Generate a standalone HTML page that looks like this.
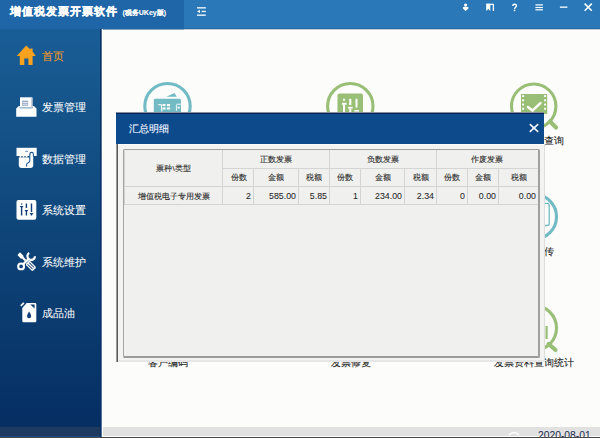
<!DOCTYPE html>
<html><head><meta charset="utf-8">
<style>
*{margin:0;padding:0;box-sizing:border-box}
html,body{width:600px;height:438px;overflow:hidden;background:#fcfcfa;font-family:"Liberation Sans",sans-serif}
.abs{position:absolute}
#topL{left:0;top:0;width:184px;height:29px;background:#1f66a8}
#topR{left:184px;top:0;width:416px;height:29px;background:#2a78b8}
#title{left:10px;top:2.5px;font-size:11px;font-weight:bold;color:#fff;white-space:nowrap;line-height:16px;letter-spacing:1.05px;-webkit-text-stroke:0.3px #fff}
#title small{font-size:7px;font-weight:bold;margin-left:4px;position:relative;top:0.5px;letter-spacing:0;-webkit-text-stroke:0.1px #fff}
#side{left:0;top:29px;width:101px;height:409px;background:linear-gradient(#1a5e98,#16578d 14%,#0e4478 52%,#052d62);border-right:1px solid #06306a}
.nav{left:42px;font-size:10.5px;color:#fff;white-space:nowrap;line-height:12px;-webkit-text-stroke:0.05px #fff}
#content{left:102px;top:29px;width:498px;height:409px;background:#fcfcfa;border-left:1px solid #fff}
#status{left:103px;top:427px;width:497px;height:9px;background:#e1e1e1}
#statusL{left:0;top:427px;width:100px;height:9px;background:#1f3a60}
.lbl{font-size:9.7px;color:#1e1e1e;-webkit-text-stroke:0.1px #1e1e1e;white-space:nowrap;line-height:12px;text-align:center;width:120px}
#dtitle{left:129px;top:123px;font-size:10px;color:#eef4ff;-webkit-text-stroke:0.15px #eef4ff;line-height:12px;white-space:nowrap}
.t{font-size:8px;color:#2a2a2a;-webkit-text-stroke:0.1px #2a2a2a;white-space:nowrap}
.n{font-size:9.8px;color:#1e1e1e;white-space:nowrap;transform:scaleX(0.9);transform-origin:100% 50%;-webkit-text-stroke:0.05px #1e1e1e}
</style></head><body>
<div id="topL" class="abs"></div>
<div id="topR" class="abs"></div>
<div id="title" class="abs">增值税发票开票软件<small>(税务UKey版)</small></div>

<!-- top icons -->
<svg class="abs" style="left:0;top:0" width="600" height="29" viewBox="0 0 600 29">
  <g fill="#fff">
    <rect x="197" y="7.2" width="8.8" height="1.3"/>
    <rect x="197" y="14.5" width="8.8" height="1.3"/>
    <polygon points="197,11.4 200,9.8 200,13"/>
    <rect x="201.6" y="10.8" width="4.2" height="1.3"/>
  </g>
  <g fill="#fff">
    <circle cx="465.6" cy="5.1" r="1.6"/>
    <path d="M462.9 7 L468.4 7 L468.4 8.6 L465.6 11 L462.9 8.6 Z"/>
  </g>
  <path d="M486.3 4.4 L493.4 4.4 L493.4 10.9" fill="none" stroke="#fff" stroke-width="1.3"/>
  <path d="M486.2 3.8 L490.3 3.8 L490.3 11 L488.3 9 L486.2 11 Z" fill="#fff"/>
  <path d="M512.7 6 Q512.8 4.2 514.6 4.2 Q516.4 4.2 516.4 5.8 Q516.4 6.9 515.3 7.5 Q514.5 8 514.5 9.2" fill="none" stroke="#fff" stroke-width="1.4"/><rect x="513.8" y="9.9" width="1.5" height="1.3" fill="#fff"/>
  <g fill="#fff">
    <rect x="535.4" y="4.3" width="7.5" height="1.2"/>
    <rect x="535.4" y="6.9" width="7.5" height="1.2"/>
    <rect x="535.4" y="9.2" width="7.5" height="1.2"/>
    <rect x="559.9" y="6.5" width="7.5" height="1.3"/>
  </g>
  <path d="M584.6 3.6 L591.8 10.8 M591.8 3.6 L584.6 10.8" stroke="#fff" stroke-width="1.5"/>
</svg>

<div id="side" class="abs"></div>
<div id="statusL" class="abs"></div>

<!-- sidebar icons -->
<svg class="abs" style="left:0;top:29px" width="101" height="300" viewBox="0 29 101 300">
  <!-- home -->
  <path d="M26.2 45.6 L30.4 49.4 L30.4 48.4 L32.6 48.4 L32.6 51.4 L35.8 55.9 L32.6 55.9 L32.6 65 L28.4 65 L28.4 58.5 L24.3 58.5 L24.3 65 L19.8 65 L19.8 55.9 L16.8 55.9 Z" fill="#f7a21e"/>
  <!-- invoice/printer -->
  <rect x="20" y="97.3" width="12.4" height="10.3" fill="#fff"/><rect x="30.9" y="97.8" width="1.5" height="9.8" fill="#c8d0dc"/>
  <rect x="22" y="100.6" width="6.2" height="5.2" fill="#9aacc8"/>
  <rect x="22.6" y="102" width="5" height="0.9" fill="#e8ecf4"/><rect x="22.6" y="103.8" width="5" height="0.9" fill="#e8ecf4"/>
  <path d="M16.2 108.6 L18.8 105.9 L19.8 105.9 L19.8 108.3 L32.6 108.3 L32.6 105.9 L33.9 105.9 L36.5 108.6 L36.5 116.7 L16.2 116.7 Z" fill="#fff"/>
  <!-- data mgmt -->
  <rect x="16.5" y="147.8" width="20.2" height="8.2" fill="#fff"/>
  <path d="M18.8 157.6 H33.2 V165.6 Q33.2 168 30.8 168 H21.2 Q18.8 168 18.8 165.6 Z" fill="#fff"/>
  <rect x="29.6" y="155" width="3.6" height="3" fill="#fff"/>
  <g fill="#fff"><rect x="19.6" y="156" width="1.8" height="1.6"/><rect x="22.6" y="156" width="1.8" height="1.6"/><rect x="25.6" y="156" width="1.8" height="1.6"/></g>
  <path d="M25.6 151.9 L26.6 150.8 L27.6 151.9" stroke="#1b5594" stroke-width="0.9" fill="none"/>
  <path d="M33.4 156.2 V154.3 Q33.4 152.4 31.6 152.4 Q29.8 152.4 29.8 154.3 V160.6 Q29.8 162.2 28.2 162.7 Q26.6 163.2 26.6 164.8 V166.4" stroke="#1b5594" stroke-width="1.1" fill="none"/>
  <!-- settings -->
  <rect x="16.5" y="199.9" width="19.8" height="19.8" rx="2" fill="#fff"/>
  <g stroke="#123f78" stroke-width="1.4">
    <line x1="21.6" y1="203.5" x2="21.6" y2="204.6"/><line x1="21.6" y1="207" x2="21.6" y2="215.5"/>
    <line x1="26.4" y1="203.5" x2="26.4" y2="208"/><line x1="26.4" y1="210.5" x2="26.4" y2="215.5"/>
    <line x1="31.5" y1="203.5" x2="31.5" y2="212"/><line x1="31.5" y1="214" x2="31.5" y2="215.5"/>
  </g>
  <g fill="#123f78">
    <polygon points="19.6,206 23.6,206 21.6,208.2"/>
    <polygon points="24.4,210 28.4,210 26.4,212.2"/>
    <polygon points="29.5,213 33.5,213 31.5,215.2"/>
  </g>
  <!-- tools -->
  <circle cx="21.1" cy="266.4" r="2.9" fill="none" stroke="#fff" stroke-width="2.1"/>
  <line x1="23.2" y1="264.3" x2="29" y2="258.5" stroke="#fff" stroke-width="2.3"/>
  <path d="M35 256.2 A3.8 3.8 0 1 1 29.2 252.9" fill="none" stroke="#fff" stroke-width="2.2"/>
  <g transform="rotate(45 25.5 260.5)">
    <rect x="15.8" y="258.6" width="5.6" height="3.8" rx="0.8" fill="#fff"/>
    <rect x="21" y="259.5" width="4.5" height="2" fill="#fff"/>
    <rect x="28.2" y="257.7" width="9.8" height="5.6" rx="1.2" fill="#fff"/>
    <rect x="29.6" y="258.9" width="7" height="0.9" fill="#134179"/>
    <rect x="29.6" y="261.2" width="7" height="0.9" fill="#134179"/>
  </g>
  <!-- oil -->
  <path d="M26.6 303.1 L35 303.1 Q36.3 303.1 36.3 304.4 L36.3 321 Q36.3 322.3 35 322.3 L23.6 322.3 Q22.3 322.3 22.3 321 L22.3 307.9 Z" fill="#fff"/>
  <path d="M20.2 305.3 L23.3 302.3 L24.5 303.5 L21.4 306.5 Z" fill="#fff"/>
  <polygon points="30.2,304.6 34.6,304.6 34.6,308.6" fill="#123f78"/>
  <path d="M29.1 311.6 Q27 314.8 27 316 Q27 318.2 29.1 318.2 Q31.2 318.2 31.2 316 Q31.2 314.8 29.1 311.6 Z" fill="#123f78"/>
</svg>

<div class="abs nav" style="top:49.5px;color:#f59c1c;-webkit-text-stroke:0.05px #f59c1c">首页</div>
<div class="abs nav" style="top:101.3px">发票管理</div>
<div class="abs nav" style="top:152.6px">数据管理</div>
<div class="abs nav" style="top:203.8px">系统设置</div>
<div class="abs nav" style="top:255.5px">系统维护</div>
<div class="abs nav" style="top:306.8px">成品油</div>

<div id="content" class="abs"></div>
<div id="status" class="abs"></div>
<div class="abs" style="left:101px;top:29px;width:1px;height:409px;background:#5a7294"></div>
<div class="abs" style="left:184px;top:28px;width:416px;height:1px;background:#2468a4"></div>
<div class="abs" style="left:184px;top:29px;width:416px;height:1px;background:#c4ccd4"></div>
<div class="abs" style="left:103px;top:29px;width:81px;height:1px;background:#8aa4c0"></div>

<!-- content icons -->
<svg class="abs" style="left:102px;top:29px" width="498" height="398" viewBox="102 29 498 398">
  <!-- icon 1 teal -->
  <circle cx="167.5" cy="106.2" r="22.7" fill="none" stroke="#72bbc5" stroke-width="3.1"/>
  <path d="M153.8 100 Q153.8 98.8 155 98.8 L179.4 98.8 Q181 98.8 181 100.4 L181 115 L153.8 115 Z" fill="#72bbc5"/>
  <polygon points="166.3,96.8 174.5,92.9 176.8,96.8" fill="#72bbc5"/>
  <polyline points="158.2,104.7 161.3,104.7 161.8,111.5" fill="none" stroke="#fff" stroke-width="1.1"/>
  <g fill="#fff"><rect x="162.5" y="104" width="3" height="2.1"/><rect x="166.9" y="104" width="3.2" height="2.1"/><rect x="162.5" y="107.4" width="3" height="2.1"/><rect x="166.9" y="107.4" width="3.2" height="2.1"/></g>
  <path d="M181.2 104.2 L177.4 104.2 Q176.4 104.2 176.4 105.3 L176.4 111" fill="none" stroke="#fff" stroke-width="0.9"/>
  <rect x="177.6" y="106.6" width="2" height="2" fill="#fff"/>
  <!-- icon 2 green -->
  <circle cx="350.3" cy="106.2" r="22.7" fill="none" stroke="#99be76" stroke-width="3.1"/>
  <rect x="337.5" y="93.5" width="25.5" height="22" rx="2" fill="#99be76"/>
  <g fill="#fff">
    <rect x="343" y="98.8" width="2.1" height="1.9"/><rect x="342" y="102.8" width="4.5" height="1.9"/><rect x="343" y="104.5" width="2.1" height="10"/>
    <rect x="349.2" y="98.8" width="2.1" height="6.2"/><rect x="348.1" y="106.8" width="4.6" height="1.8"/><rect x="349.2" y="108.5" width="2.1" height="6"/>
    <rect x="355.5" y="98.8" width="2" height="8.8"/><rect x="354.3" y="110" width="4.7" height="1.6"/>
  </g>
  <!-- icon 3 magnifier film -->
  <circle cx="533.7" cy="106.2" r="22.2" fill="none" stroke="#99be76" stroke-width="3.1"/>
  <line x1="550" y1="121.5" x2="556" y2="127.5" stroke="#99be76" stroke-width="4.2" stroke-linecap="round"/>
  <rect x="521" y="94" width="26.2" height="20" fill="#99be76"/>
  <g fill="#fff"><rect x="522.1" y="95.1" width="2" height="2" rx="0.4"/><rect x="522.1" y="99.3" width="2" height="2" rx="0.4"/><rect x="522.1" y="103.5" width="2" height="2" rx="0.4"/><rect x="522.1" y="107.7" width="2" height="2" rx="0.4"/><rect x="544.1" y="95.1" width="2" height="2" rx="0.4"/><rect x="544.1" y="99.3" width="2" height="2" rx="0.4"/><rect x="544.1" y="103.5" width="2" height="2" rx="0.4"/><rect x="544.1" y="107.7" width="2" height="2" rx="0.4"/></g>
  <path d="M527.9 107 L532.5 110.6 L540.4 103.2" stroke="#fff" stroke-width="2.5" stroke-linecap="round" fill="none"/>
  <!-- row2 col3 teal -->
  <circle cx="534" cy="216.8" r="22.5" fill="none" stroke="#72bbc5" stroke-width="3.1"/>
  <rect x="520" y="203.3" width="29.2" height="22.2" rx="2" fill="none" stroke="#72bbc5" stroke-width="1.3"/>
  <!-- row3 col3 green -->
  <circle cx="534" cy="328" r="22.5" fill="none" stroke="#99be76" stroke-width="3.1"/>
  <line x1="548.5" y1="344" x2="555.5" y2="349.8" stroke="#99be76" stroke-width="4.2" stroke-linecap="round"/>
  <rect x="545.5" y="326" width="2.2" height="13" fill="#99be76"/>
</svg>
<div class="abs lbl" style="left:474px;top:135px">已开发票查询</div>
<div class="abs lbl" style="left:474px;top:246px">发票上传</div>
<div class="abs lbl" style="left:107.5px;top:357px">客户编码</div>
<div class="abs lbl" style="left:290.5px;top:357px">发票修复</div>
<div class="abs lbl" style="left:474px;top:357px">发票资料查询统计</div>

<!-- status bar -->
<svg class="abs" style="left:500px;top:427px" width="30" height="11" viewBox="500 427 30 11"><path d="M509 435 Q514 430 519 435" stroke="#fff" stroke-width="1.2" fill="none"/></svg>
<div class="abs" id="date" style="left:538px;top:430px;font-size:10.3px;color:#1a2a50;line-height:12px;white-space:nowrap">2020-08-01</div>
<div class="abs" style="left:0;top:436px;width:100px;height:1px;background:#1e4a86"></div>
<div class="abs" style="left:0;top:437px;width:600px;height:1px;background:#474747"></div>

<!-- dialog -->
<div class="abs" style="left:118px;top:144px;width:426px;height:218px;background:#f3f3f1"></div>
<div class="abs" style="left:118px;top:144px;width:426px;height:1px;background:#fcfbf7"></div>
<div class="abs" style="left:116px;top:112px;width:428px;height:32px;background:#0c4a8c;border-top:1px solid #8a90a0"></div>
<div class="abs" style="left:116px;top:113px;width:428px;height:1px;background:#06205c"></div>
<div class="abs" style="left:116px;top:144px;width:1px;height:218px;background:#9a9a9a"></div><div class="abs" style="left:117px;top:144px;width:1px;height:218px;background:#5a5a5a"></div>
<div class="abs" style="left:544px;top:144px;width:1px;height:218px;background:#dedede"></div>
<div class="abs" style="left:118px;top:360px;width:427px;height:2px;background:#e6e6e6"></div>
<div id="dtitle" class="abs">汇总明细</div>
<svg class="abs" style="left:528px;top:122px" width="12" height="12" viewBox="0 0 12 12"><path d="M1.8 2.1 L10.2 9.9 M10.2 2.1 L1.8 9.9" stroke="#fff" stroke-width="1.5"/></svg>
<div class="abs" style="left:123px;top:149px;width:417px;height:209px;background:#f0f0ee;border-left:1px solid #a4a4a4;border-top:1px solid #a0a0a0;border-right:2px solid #a0a0a0;border-bottom:2px solid #9a9a9a;border-radius:1.5px"></div>
<div class="abs" style="left:124px;top:150px;width:1px;height:55px;background:#d4d4d4"></div>
<div class="abs" style="left:222px;top:168px;width:316px;height:1px;background:#d4d4d4"></div>
<div class="abs" style="left:124px;top:186px;width:414px;height:1px;background:#d4d4d4"></div>
<div class="abs" style="left:124px;top:204px;width:414px;height:1px;background:#d4d4d4"></div>
<div class="abs" style="left:222px;top:150px;width:1px;height:55px;background:#d4d4d4"></div>
<div class="abs" style="left:329px;top:150px;width:1px;height:55px;background:#d4d4d4"></div>
<div class="abs" style="left:436px;top:150px;width:1px;height:55px;background:#d4d4d4"></div>
<div class="abs" style="left:253px;top:168px;width:1px;height:37px;background:#d4d4d4"></div>
<div class="abs" style="left:298px;top:168px;width:1px;height:37px;background:#d4d4d4"></div>
<div class="abs" style="left:360px;top:168px;width:1px;height:37px;background:#d4d4d4"></div>
<div class="abs" style="left:404px;top:168px;width:1px;height:37px;background:#d4d4d4"></div>
<div class="abs" style="left:467px;top:168px;width:1px;height:37px;background:#d4d4d4"></div>
<div class="abs" style="left:498px;top:168px;width:1px;height:37px;background:#d4d4d4"></div>
<div class="abs t" style="left:124px;top:151px;width:99px;height:36px;line-height:36px;text-align:center">票种\类型</div>
<div class="abs t" style="left:223px;top:151px;width:106px;height:18px;line-height:18px;text-align:center">正数发票</div>
<div class="abs t" style="left:329px;top:151px;width:107px;height:18px;line-height:18px;text-align:center">负数发票</div>
<div class="abs t" style="left:436px;top:151px;width:102px;height:18px;line-height:18px;text-align:center">作废发票</div>
<div class="abs t" style="left:224px;top:169px;width:29px;height:18px;line-height:18px;text-align:center">份数</div>
<div class="abs t" style="left:254px;top:169px;width:44px;height:18px;line-height:18px;text-align:center">金额</div>
<div class="abs t" style="left:299px;top:169px;width:30px;height:18px;line-height:18px;text-align:center">税额</div>
<div class="abs t" style="left:330px;top:169px;width:30px;height:18px;line-height:18px;text-align:center">份数</div>
<div class="abs t" style="left:361px;top:169px;width:43px;height:18px;line-height:18px;text-align:center">金额</div>
<div class="abs t" style="left:405px;top:169px;width:31px;height:18px;line-height:18px;text-align:center">税额</div>
<div class="abs t" style="left:437px;top:169px;width:30px;height:18px;line-height:18px;text-align:center">份数</div>
<div class="abs t" style="left:468px;top:169px;width:30px;height:18px;line-height:18px;text-align:center">金额</div>
<div class="abs t" style="left:499px;top:169px;width:39px;height:18px;line-height:18px;text-align:center">税额</div>
<div class="abs t" style="left:124px;top:188px;width:99px;height:17px;line-height:17px;text-align:center">增值税电子专用发票</div>
<div class="abs n" style="left:224px;top:187px;width:27px;height:17px;line-height:17px;text-align:right">2</div>
<div class="abs n" style="left:254px;top:187px;width:42px;height:17px;line-height:17px;text-align:right">585.00</div>
<div class="abs n" style="left:299px;top:187px;width:28px;height:17px;line-height:17px;text-align:right">5.85</div>
<div class="abs n" style="left:330px;top:187px;width:28px;height:17px;line-height:17px;text-align:right">1</div>
<div class="abs n" style="left:361px;top:187px;width:41px;height:17px;line-height:17px;text-align:right">234.00</div>
<div class="abs n" style="left:405px;top:187px;width:29px;height:17px;line-height:17px;text-align:right">2.34</div>
<div class="abs n" style="left:437px;top:187px;width:28px;height:17px;line-height:17px;text-align:right">0</div>
<div class="abs n" style="left:468px;top:187px;width:28px;height:17px;line-height:17px;text-align:right">0.00</div>
<div class="abs n" style="left:499px;top:187px;width:37px;height:17px;line-height:17px;text-align:right">0.00</div>
</body></html>
